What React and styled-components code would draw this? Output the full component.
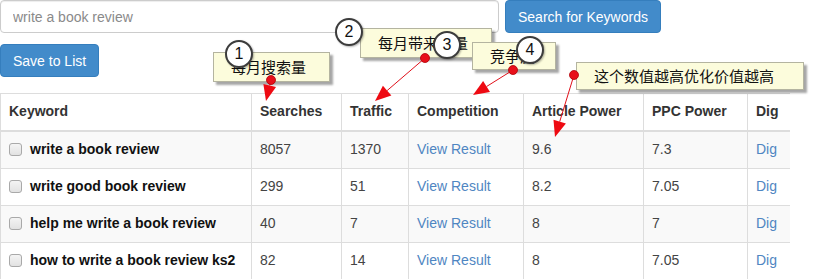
import React from 'react'
import styled, { createGlobalStyle } from 'styled-components'

const GlobalStyle = createGlobalStyle`
  html, body {
    margin: 0;
    padding: 0;
    background: #fff;
  }
  body {
    font-family: "Liberation Sans", Arial, sans-serif;
    font-size: 14px;
    line-height: 1.42857;
    color: #333;
  }
`

const rows = [
  { keyword: 'write a book review', searches: '8057', traffic: '1370', article: '9.6', ppc: '7.3' },
  { keyword: 'write good book review', searches: '299', traffic: '51', article: '8.2', ppc: '7.05' },
  { keyword: 'help me write a book review', searches: '40', traffic: '7', article: '8', ppc: '7' },
  { keyword: 'how to write a book review ks2', searches: '82', traffic: '14', article: '8', ppc: '7.05' }
]

const columns = [
  { title: 'Keyword', width: 251 },
  { title: 'Searches', width: 90 },
  { title: 'Traffic', width: 67 },
  { title: 'Competition', width: 115 },
  { title: 'Article Power', width: 120 },
  { title: 'PPC Power', width: 104 },
  { title: 'Dig', width: 42 }
]

const callouts = [
  { text: '每月搜索量', x: 213, y: 52, w: 117, h: 30 },
  { text: '每月带来流量', x: 360, y: 28, w: 132, h: 30 },
  { text: '竞争度', x: 472, y: 42, w: 84, h: 28 },
  { text: '这个数值越高优化价值越高', x: 576, y: 62, w: 228, h: 28 }
]

const badges = [
  { n: 1, x: 239, y: 54 },
  { n: 2, x: 349, y: 32 },
  { n: 3, x: 447, y: 45 },
  { n: 4, x: 530, y: 50 }
]

const arrows = [
  { x1: 271, y1: 80, x2: 266, y2: 101 },
  { x1: 425, y1: 58, x2: 375, y2: 101 },
  { x1: 513, y1: 70, x2: 473, y2: 95 },
  { x1: 574, y1: 75, x2: 555, y2: 137 }
]

const Page = styled.div`
  position: relative;
  width: 814px;
  height: 279px;
  overflow: hidden;
`

const SearchRow = styled.div`
  display: flex;
  gap: 6px;
  height: 33px;
`

const SearchInput = styled.input`
  box-sizing: border-box;
  width: 499px;
  height: 33px;
  padding: 6px 12px;
  border: 1px solid #ccc;
  border-radius: 4px;
  box-shadow: inset 0 1px 1px rgba(0, 0, 0, 0.075);
  font-family: inherit;
  font-size: 14px;
  color: #555;
  &::placeholder {
    color: #8a8a8a;
  }
`

const Button = styled.button`
  box-sizing: border-box;
  height: 33px;
  padding: 0 12px;
  border: 1px solid #357ebd;
  border-radius: 4px;
  background: #428bca;
  color: #fff;
  font-family: inherit;
  font-size: 14px;
  white-space: nowrap;
  cursor: pointer;
`

const SaveButton = styled(Button)`
  display: block;
  margin-top: 11px;
`

const Table = styled.table`
  margin-top: 16px;
  width: 789px;
  table-layout: fixed;
  border-collapse: collapse;
  border-top: 1px solid #ddd;
`

const Th = styled.th`
  padding: 8px;
  text-align: left;
  font-weight: bold;
  color: #333;
  border-left: 1px solid #ddd;
  border-bottom: 2px solid #ddd;
  white-space: nowrap;
`

const Row = styled.tr`
  background: ${p => (p.$striped ? '#f9f9f9' : '#fff')};
`

const Td = styled.td`
  padding: 8px;
  border-left: 1px solid #ddd;
  border-top: 1px solid #ddd;
  white-space: nowrap;
  color: #444;
`

const KeywordCell = styled(Td)`
  font-weight: bold;
  color: #111;
`

const Check = styled.input`
  appearance: none;
  box-sizing: border-box;
  width: 13px;
  height: 13px;
  margin: 0 8px 0 0;
  vertical-align: -2px;
  border: 1px solid #a9a9a9;
  border-radius: 3px;
  background: linear-gradient(#f4f4f4, #e2e2e2);
`

const Link = styled.a`
  color: #4f86c2;
  text-decoration: none;
`

const Callout = styled.div`
  position: absolute;
  left: ${p => p.$x}px;
  top: ${p => p.$y}px;
  width: ${p => p.$w}px;
  height: ${p => p.$h}px;
  box-sizing: border-box;
  display: flex;
  align-items: center;
  padding-left: 17px;
  background: #fcfcdc;
  border: 1px solid #b4b4a0;
  box-shadow: 3px 3px 2px rgba(0, 0, 0, 0.35);
  font-family: "Noto Sans CJK SC", "Liberation Sans", sans-serif;
  font-size: 15px;
  color: #111;
  white-space: nowrap;
`

const Badge = styled.div`
  position: absolute;
  left: ${p => p.$x - 14}px;
  top: ${p => p.$y - 14}px;
  width: 28px;
  height: 28px;
  box-sizing: border-box;
  border: 2px solid #3c3c3c;
  border-radius: 50%;
  background: #fff;
  box-shadow: 1px 1px 2px rgba(0, 0, 0, 0.3);
  display: flex;
  align-items: center;
  justify-content: center;
  font-size: 16px;
  color: #111;
`

const Overlay = styled.svg`
  position: absolute;
  left: 0;
  top: 0;
  pointer-events: none;
`

function Arrow({ x1, y1, x2, y2 }) {
  const dx = x2 - x1
  const dy = y2 - y1
  const len = Math.hypot(dx, dy)
  const ux = dx / len
  const uy = dy / len
  const head = 16
  const half = 6.5
  const bx = x2 - ux * head
  const by = y2 - uy * head
  const pts = [
    `${x2},${y2}`,
    `${bx - uy * half},${by + ux * half}`,
    `${bx + uy * half},${by - ux * half}`
  ].join(' ')
  return (
    <g>
      <line x1={x1} y1={y1} x2={bx} y2={by} stroke="#e0101a" strokeWidth="1" />
      <polygon points={pts} fill="#ee0a12" />
      <circle cx={x1} cy={y1} r="4.5" fill="#e8101a" stroke="#b00008" strokeWidth="0.8" />
    </g>
  )
}

export default function App() {
  return (
    <Page>
      <GlobalStyle />
      <SearchRow>
        <SearchInput placeholder="write a book review" />
        <Button>Search for Keywords</Button>
      </SearchRow>
      <SaveButton>Save to List</SaveButton>
      <Table>
        <colgroup>
          {columns.map(c => (
            <col key={c.title} style={{ width: c.width }} />
          ))}
        </colgroup>
        <thead>
          <tr>
            {columns.map(c => (
              <Th key={c.title}>{c.title}</Th>
            ))}
          </tr>
        </thead>
        <tbody>
          {rows.map((r, i) => (
            <Row key={r.keyword} $striped={i % 2 === 0}>
              <KeywordCell>
                <Check type="checkbox" />
                {r.keyword}
              </KeywordCell>
              <Td>{r.searches}</Td>
              <Td>{r.traffic}</Td>
              <Td><Link href="#">View Result</Link></Td>
              <Td>{r.article}</Td>
              <Td>{r.ppc}</Td>
              <Td><Link href="#">Dig</Link></Td>
            </Row>
          ))}
        </tbody>
      </Table>

      {callouts.map(c => (
        <Callout key={c.text} $x={c.x} $y={c.y} $w={c.w} $h={c.h}>
          {c.text}
        </Callout>
      ))}
      <Overlay width="814" height="279">
        {arrows.map((a, i) => (
          <Arrow key={i} {...a} />
        ))}
      </Overlay>
      {badges.map(b => (
        <Badge key={b.n} $x={b.x} $y={b.y}>{b.n}</Badge>
      ))}
    </Page>
  )
}
